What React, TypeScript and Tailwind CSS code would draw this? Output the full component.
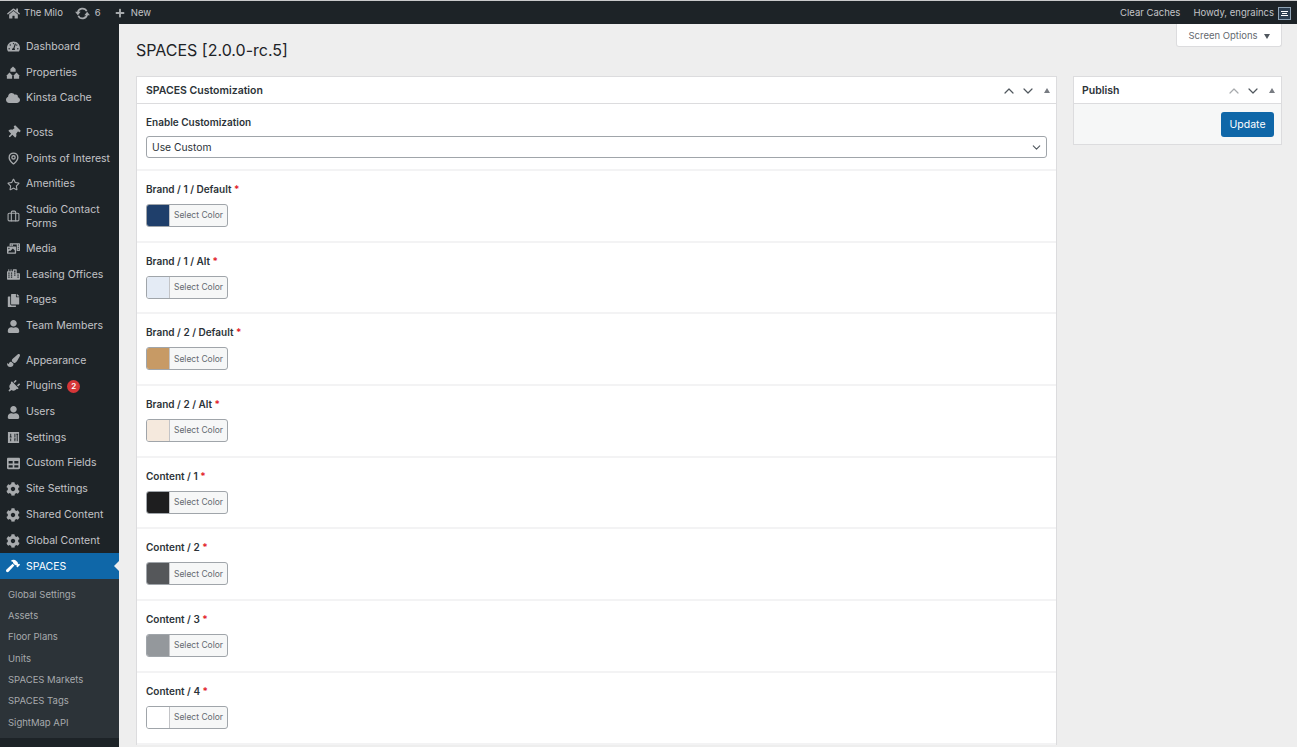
// App.tsx
import React from 'react';
import {
  FaHome, FaPlus, FaTachometerAlt, FaCloud, FaThumbtack, FaRegStar, FaPhotoVideo,
  FaPaintBrush, FaPlug, FaUser, FaCog, FaTable, FaCity, FaCopy, FaHammer,
} from 'react-icons/fa';
import { Briefcase, ChevronDown, ChevronUp, MapPin } from 'lucide-react';

type MenuItem = { label: string; icon: React.ReactNode; badge?: string; tall?: boolean };

const ic = 'w-[13px] h-[13px]';

// three little houses stacked as a pyramid
const HousesIcon = () => (
  <svg viewBox="0 0 16 16" className="w-[15px] h-[15px]" fill="currentColor">
    <path d="M8 1 11 4v3H5V4z" />
    <path d="M4 8 7 11v4H1v-4z" />
    <path d="M12 8l3 3v4H9v-4z" />
  </svg>
);

const SettingsIcon = () => (
  <svg viewBox="0 0 14 14" className={ic} fill="currentColor">
    <path fillRule="evenodd" d="M1 1h12v12H1zM3.5 3v3H3v1h2V6h-.5V3zm0 5v3h1V8zM8 3v4h1V3zm2 0v1h.5v7h1V4h.5V3zM7.5 8v1H8v2h1V9h.5V8z" />
  </svg>
);

const UpdateIcon = () => (
  <svg viewBox="0 0 16 14" className="w-[15px] h-[13px] text-[#a7aaad]" fill="none" stroke="currentColor" strokeWidth="1.8">
    <path d="M3 6a5 5 0 0 1 9.5-1.4" />
    <path d="M13 8a5 5 0 0 1-9.5 1.4" />
    <path d="M0 5h6L3 9z M10 9h6l-3-4z" fill="currentColor" stroke="none" />
  </svg>
);

const groups: MenuItem[][] = [
  [
    { label: 'Dashboard', icon: <FaTachometerAlt className={ic} /> },
    { label: 'Properties', icon: <HousesIcon /> },
    { label: 'Kinsta Cache', icon: <FaCloud className="w-[14px] h-[14px]" /> },
  ],
  [
    { label: 'Posts', icon: <FaThumbtack className={`${ic} rotate-45`} /> },
    { label: 'Points of Interest', icon: <MapPin className={ic} strokeWidth={2.5} /> },
    { label: 'Amenities', icon: <FaRegStar className={ic} /> },
    { label: 'Studio Contact Forms', icon: <Briefcase className={ic} strokeWidth={2} />, tall: true },
    { label: 'Media', icon: <FaPhotoVideo className={ic} /> },
    { label: 'Leasing Offices', icon: <FaCity className={ic} /> },
    { label: 'Pages', icon: <FaCopy className={ic} /> },
    { label: 'Team Members', icon: <FaUser className={ic} /> },
  ],
  [
    { label: 'Appearance', icon: <FaPaintBrush className={ic} /> },
    { label: 'Plugins', icon: <FaPlug className={`${ic} rotate-45`} />, badge: '2' },
    { label: 'Users', icon: <FaUser className={ic} /> },
    { label: 'Settings', icon: <SettingsIcon /> },
    { label: 'Custom Fields', icon: <FaTable className={ic} /> },
    { label: 'Site Settings', icon: <FaCog className="w-[14px] h-[14px]" /> },
    { label: 'Shared Content', icon: <FaCog className="w-[14px] h-[14px]" /> },
    { label: 'Global Content', icon: <FaCog className="w-[14px] h-[14px]" /> },
  ],
];

const subItems = ['Global Settings', 'Assets', 'Floor Plans', 'Units', 'SPACES Markets', 'SPACES Tags', 'SightMap API'];

const colorFields = [
  { label: 'Brand / 1 / Default', color: '#1f3f6b' },
  { label: 'Brand / 1 / Alt', color: '#e4ebf5' },
  { label: 'Brand / 2 / Default', color: '#c79a65' },
  { label: 'Brand / 2 / Alt', color: '#f5e9dd' },
  { label: 'Content / 1', color: '#1e1e1f' },
  { label: 'Content / 2', color: '#55575a' },
  { label: 'Content / 3', color: '#94989c' },
  { label: 'Content / 4', color: '#ffffff' },
];

const PanelControls = ({ dim }: { dim?: boolean }) => (
  <div className="flex items-center text-[#50575e]">
    <ChevronUp className={`w-[16px] h-[16px] ${dim ? 'text-[#a7aaad]' : ''}`} strokeWidth={1.8} />
    <ChevronDown className="w-[16px] h-[16px] ml-[3px]" strokeWidth={1.8} />
    <span className="ml-[8px] w-0 h-0 border-x-[3px] border-x-transparent border-b-[5px] border-b-[#787c82]" />
  </div>
);

const ColorField = ({ label, color }: { label: string; color: string }) => (
  <div className="h-[71.7px] border-b-2 border-[#f3f3f4] pl-[9px] pt-[12px]">
    <div className="text-[10px] leading-[13px] font-semibold text-[#2c3338]">
      {label} <span className="text-[#e2222a]">*</span>
    </div>
    <div className="mt-[8px] flex w-[82px] h-[23px] border border-[#a0a5aa] rounded-[3px] bg-[#f6f7f7] overflow-hidden">
      <div className="w-[23px] h-full border-r border-[#c3c4c7]" style={{ backgroundColor: color }} />
      <div className="flex-1 flex items-center justify-center text-[8.5px] text-[#646970]">Select Color</div>
    </div>
  </div>
);

export default function App() {
  return (
    <div className="h-[747px] w-[1297px] overflow-hidden flex flex-col bg-[#eeeeee] font-['Inter','Liberation_Sans',sans-serif]">
      {/* Admin bar */}
      <div className="h-6 shrink-0 bg-[#1d2327] border-t border-[#c9cacb] flex items-center justify-between pt-[1px] pl-[7px] pr-[6px] text-[9.5px] text-[#c3c4c7]">
        <div className="flex items-center">
          <FaHome className="w-[13px] h-[13px] text-[#a7aaad]" />
          <span className="ml-[4px]">The Milo</span>
          <span className="ml-[12px]"><UpdateIcon /></span>
          <span className="ml-[5px]">6</span>
          <FaPlus className="ml-[14px] w-[10px] h-[10px] text-[#a7aaad]" />
          <span className="ml-[6px]">New</span>
        </div>
        <div className="flex items-center">
          <span>Clear Caches</span>
          <span className="ml-[13px]">Howdy, engraincs</span>
          <span className="ml-[4px] w-[13px] h-[13px] border border-[#8fa3b5] bg-[#2c3e50] flex flex-col items-center justify-center gap-[1px]">
            <span className="w-[7px] h-px bg-white" />
            <span className="w-[5px] h-px bg-white" />
            <span className="w-[7px] h-px bg-white" />
          </span>
        </div>
      </div>

      <div className="flex flex-1 min-h-0">
        {/* Sidebar */}
        <div className="w-[119px] shrink-0 bg-[#1d2327] text-[10.5px] text-[#c3c4c7] pt-[10px]">
          {groups.map((items, g) => (
            <div key={g} className="mb-[9px]">
              {items.map((item) => (
                <div key={item.label} className={`flex items-center pl-[6px] ${item.tall ? 'h-[39px]' : 'h-[25.7px]'}`}>
                  <span className="w-[14px] flex justify-center text-[#a7aaad] shrink-0">{item.icon}</span>
                  <span className="ml-[6px] leading-[14px]">{item.label}</span>
                  {item.badge && (
                    <span className="ml-[5px] w-[13px] h-[13px] rounded-full bg-[#d63638] text-white text-[8px] font-semibold flex items-center justify-center">
                      {item.badge}
                    </span>
                  )}
                </div>
              ))}
            </div>
          ))}
          <div className="relative -mt-[9px] h-[26px] bg-[#0f67a8] text-white flex items-center pl-[6px]">
            <FaHammer className="w-[14px] h-[14px]" />
            <span className="ml-[6px]">SPACES</span>
            <span className="absolute right-0 top-[8px] w-0 h-0 border-y-[5px] border-y-transparent border-r-[5px] border-r-[#eeeeee]" />
          </div>
          <div className="bg-[#2c3338] pt-[5px] pb-[5px] text-[9.5px] text-[#a7aaad]">
            {subItems.map((s) => (
              <div key={s} className="h-[21.3px] flex items-center pl-[8px]">{s}</div>
            ))}
          </div>
        </div>

        {/* Main content */}
        <div className="flex-1 min-w-0 pl-[17px] pr-[15px]">
          <div className="h-[52px] flex items-start justify-between">
            <h1 className="mt-[15px] text-[16px] leading-[22px] text-[#1d2327]">SPACES [2.0.0-rc.5]</h1>
            <div className="w-[106px] h-[23px] pt-[2px] bg-white border border-t-0 border-[#dcdcde] rounded-b-[3px] flex items-center justify-center gap-[6px] text-[9.5px] text-[#646970]">
              Screen Options
              <span className="w-0 h-0 border-x-[3px] border-x-transparent border-t-[5px] border-t-[#50575e]" />
            </div>
          </div>

          <div className="flex items-start gap-[16px]">
            <div className="w-[921px] bg-white border border-[#dcdcde] border-b-0 shrink-0">
              <div className="h-[27px] pt-[1px] flex items-center justify-between pl-[9px] pr-[6px] border-b border-[#dcdcde]">
                <span className="text-[10.5px] font-semibold text-[#2c3338]">SPACES Customization</span>
                <PanelControls />
              </div>
              <div className="h-[67px] border-b-2 border-[#f3f3f4] pl-[9px] pr-[9px] pt-[12px]">
                <div className="text-[10px] leading-[13px] font-semibold text-[#2c3338]">Enable Customization</div>
                <div className="mt-[7px] h-[22px] border border-[#a0a5aa] rounded-[3px] flex items-center justify-between pl-[5px] pr-[3px] pt-[1px] text-[10.3px] text-[#2c3338]">
                  Use Custom
                  <ChevronDown className="w-[13px] h-[13px] text-[#50575e]" strokeWidth={2} />
                </div>
              </div>
              {colorFields.map((f) => (
                <ColorField key={f.label} label={f.label} color={f.color} />
              ))}
            </div>

            <div className="w-[210px] bg-[#f6f7f7] border border-[#dcdcde]">
              <div className="h-[27px] pt-[1px] bg-white flex items-center justify-between pl-[8px] pr-[6px] border-b border-[#dcdcde]">
                <span className="text-[10.5px] font-semibold text-[#2c3338]">Publish</span>
                <PanelControls dim />
              </div>
              <div className="h-[40px] pt-[1px] flex items-center justify-end pr-[7px]">
                <div className="w-[53px] h-[25px] bg-[#0f67a8] rounded-[3px] text-white text-[10.5px] flex items-center justify-center">Update</div>
              </div>
            </div>
          </div>
        </div>
      </div>
    </div>
  );
}
